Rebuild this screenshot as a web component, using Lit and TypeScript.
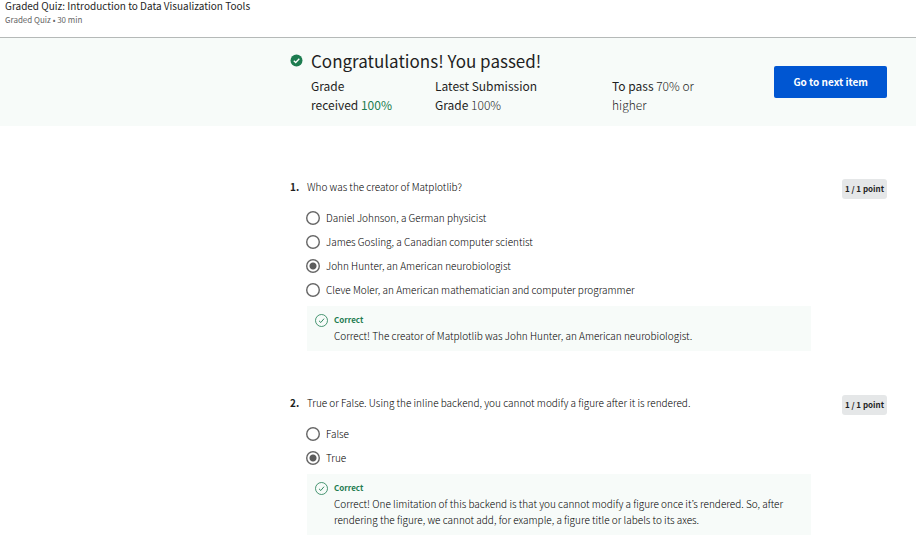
import { LitElement, html, css, svg } from "lit";
import { customElement, property } from "lit/decorators.js";

interface Question {
  text: string;
  options: string[];
  chosen: number;
  feedback: string;
}

const questions: Question[] = [
  {
    text: "Who was the creator of Matplotlib?",
    options: [
      "Daniel Johnson, a German physicist",
      "James Gosling, a Canadian computer scientist",
      "John Hunter, an American neurobiologist",
      "Cleve Moler, an American mathematician and computer programmer",
    ],
    chosen: 2,
    feedback: "Correct! The creator of Matplotlib was John Hunter, an American neurobiologist.",
  },
  {
    text: "True or False. Using the inline backend, you cannot modify a figure after it is rendered.",
    options: ["False", "True"],
    chosen: 1,
    feedback:
      "Correct! One limitation of this backend is that you cannot modify a figure once it’s rendered. So, after rendering the figure, we cannot add, for example, a figure title or labels to its axes.",
  },
];

@customElement("quiz-question")
export class QuizQuestion extends LitElement {
  @property({ type: Number }) number = 1;
  @property({ attribute: false }) question!: Question;

  static styles = css`
    :host {
      display: grid;
      grid-template-columns: 17px minmax(0, 1fr) auto;
      font-size: 10px;
      font-weight: 300;
      line-height: 16px;
      color: #000;
    }
    .number {
      font-weight: 700;
      color: #1f1f1f;
    }
    fieldset {
      border: 0;
      margin: 0;
      padding: 0;
      min-width: 0;
    }
    legend {
      padding: 0;
      margin-bottom: 11px;
    }
    .option {
      display: flex;
      align-items: center;
      gap: 6px;
      height: 24px;
    }
    input {
      appearance: none;
      flex: none;
      width: 14px;
      height: 14px;
      margin: 0 0 0 -1px;
      border-radius: 50%;
      background: radial-gradient(circle, #fff 5px, #666 6px);
    }
    input:checked {
      background: radial-gradient(circle, #5c5c5c 3px, #fff 4px, #fff 5px, #666 6px);
    }
    .feedback {
      display: grid;
      grid-template-columns: 13px 1fr;
      column-gap: 6px;
      margin-top: 4px;
      padding: 6px 8px 7px;
      background: #f7fbf9;
    }
    .feedback svg {
      width: 13px;
      height: 13px;
      margin-top: 2px;
    }
    .verdict {
      font-size: 8px;
      font-weight: 700;
      color: #1d7c50;
    }
    p {
      margin: 0;
    }
    .points {
      margin-left: 31px;
      align-self: start;
      padding: 0 3px;
      border-radius: 3px;
      background: #e5e7e8;
      color: #1f1f1f;
      font-size: 8px;
      font-weight: 700;
      line-height: 20px;
      white-space: nowrap;
    }
  `;

  render() {
    const q = this.question;
    return html`
      <span class="number">${this.number}.</span>
      <fieldset>
        <legend>${q.text}</legend>
        ${q.options.map(
          (option, i) => html`
            <label class="option">
              <input type="radio" name="answer" .checked=${i === q.chosen} />
              <span>${option}</span>
            </label>
          `
        )}
        <div class="feedback">
          <svg viewBox="0 0 13 13" fill="none" stroke="#1d7c50" aria-hidden="true">
            ${svg`<circle cx="6.5" cy="6.5" r="6" stroke-width="0.8" /><path d="M4 6.8 5.8 8.5 9 4.7" stroke-width="0.9" />`}
          </svg>
          <div>
            <div class="verdict">Correct</div>
            <p>${q.feedback}</p>
          </div>
        </div>
      </fieldset>
      <span class="points">1 / 1 point</span>
    `;
  }
}

@customElement("app-root")
export class AppRoot extends LitElement {
  static styles = css`
    :host {
      display: block;
      color: #1f1f1f;
      background: #fff;
      font-family: "Noto Sans CJK JP", "Noto Sans", sans-serif;
    }
    h1,
    h2,
    p {
      margin: 0;
    }
    header {
      padding: 0 5px 9px;
      border-bottom: 1px solid #b5b9b8;
    }
    h1 {
      font-size: 10px;
      font-weight: 400;
      line-height: 12px;
    }
    .meta {
      font-size: 8px;
      line-height: 16px;
      color: #666;
    }
    .banner {
      display: flex;
      align-items: center;
      padding: 10px 29px 10px 290px;
      background: #f7fbf9;
    }
    .badge {
      flex: none;
      align-self: flex-start;
      width: 13px;
      height: 13px;
      margin: 6px 8px 0 0;
    }
    .result {
      flex: 1;
    }
    h2 {
      font-size: 17px;
      font-weight: 400;
      line-height: 26px;
    }
    .grades {
      display: grid;
      grid-template-columns: 124px 177px 148px;
      font-size: 12px;
      font-weight: 300;
      line-height: 19px;
      padding: 2px 0;
    }
    .grades p {
      padding-right: 40px;
    }
    .grades b {
      font-weight: 400;
    }
    .pass {
      color: #1d7c50;
      font-weight: 400;
    }
    button {
      flex: none;
      padding: 0 19px;
      border: 0;
      border-radius: 2px;
      background: #0056d2;
      color: #fff;
      font-family: inherit;
      font-size: 10px;
      font-weight: 700;
      line-height: 32px;
      white-space: nowrap;
    }
    main {
      display: grid;
      row-gap: 44px;
      padding: 53px 29px 14px 290px;
    }
  `;

  render() {
    return html`
      <header>
        <h1>Graded Quiz: Introduction to Data Visualization Tools</h1>
        <p class="meta">Graded Quiz • 30 min</p>
      </header>
      <section class="banner">
        <svg class="badge" viewBox="0 0 13 13" aria-hidden="true">
          <circle cx="6.5" cy="6.5" r="6" fill="#1d7c50" />
          <path d="M3.8 6.7 5.7 8.5 9.3 4.7" fill="none" stroke="#fff" stroke-width="1.3" />
        </svg>
        <div class="result">
          <h2>Congratulations! You passed!</h2>
          <div class="grades">
            <p><b>Grade<br />received</b> <span class="pass">100%</span></p>
            <p><b>Latest Submission Grade</b> 100%</p>
            <p><b>To pass</b> 70% or higher</p>
          </div>
        </div>
        <button type="button">Go to next item</button>
      </section>
      <main>
        ${questions.map((q, i) => html`<quiz-question .number=${i + 1} .question=${q}></quiz-question>`)}
      </main>
    `;
  }
}
